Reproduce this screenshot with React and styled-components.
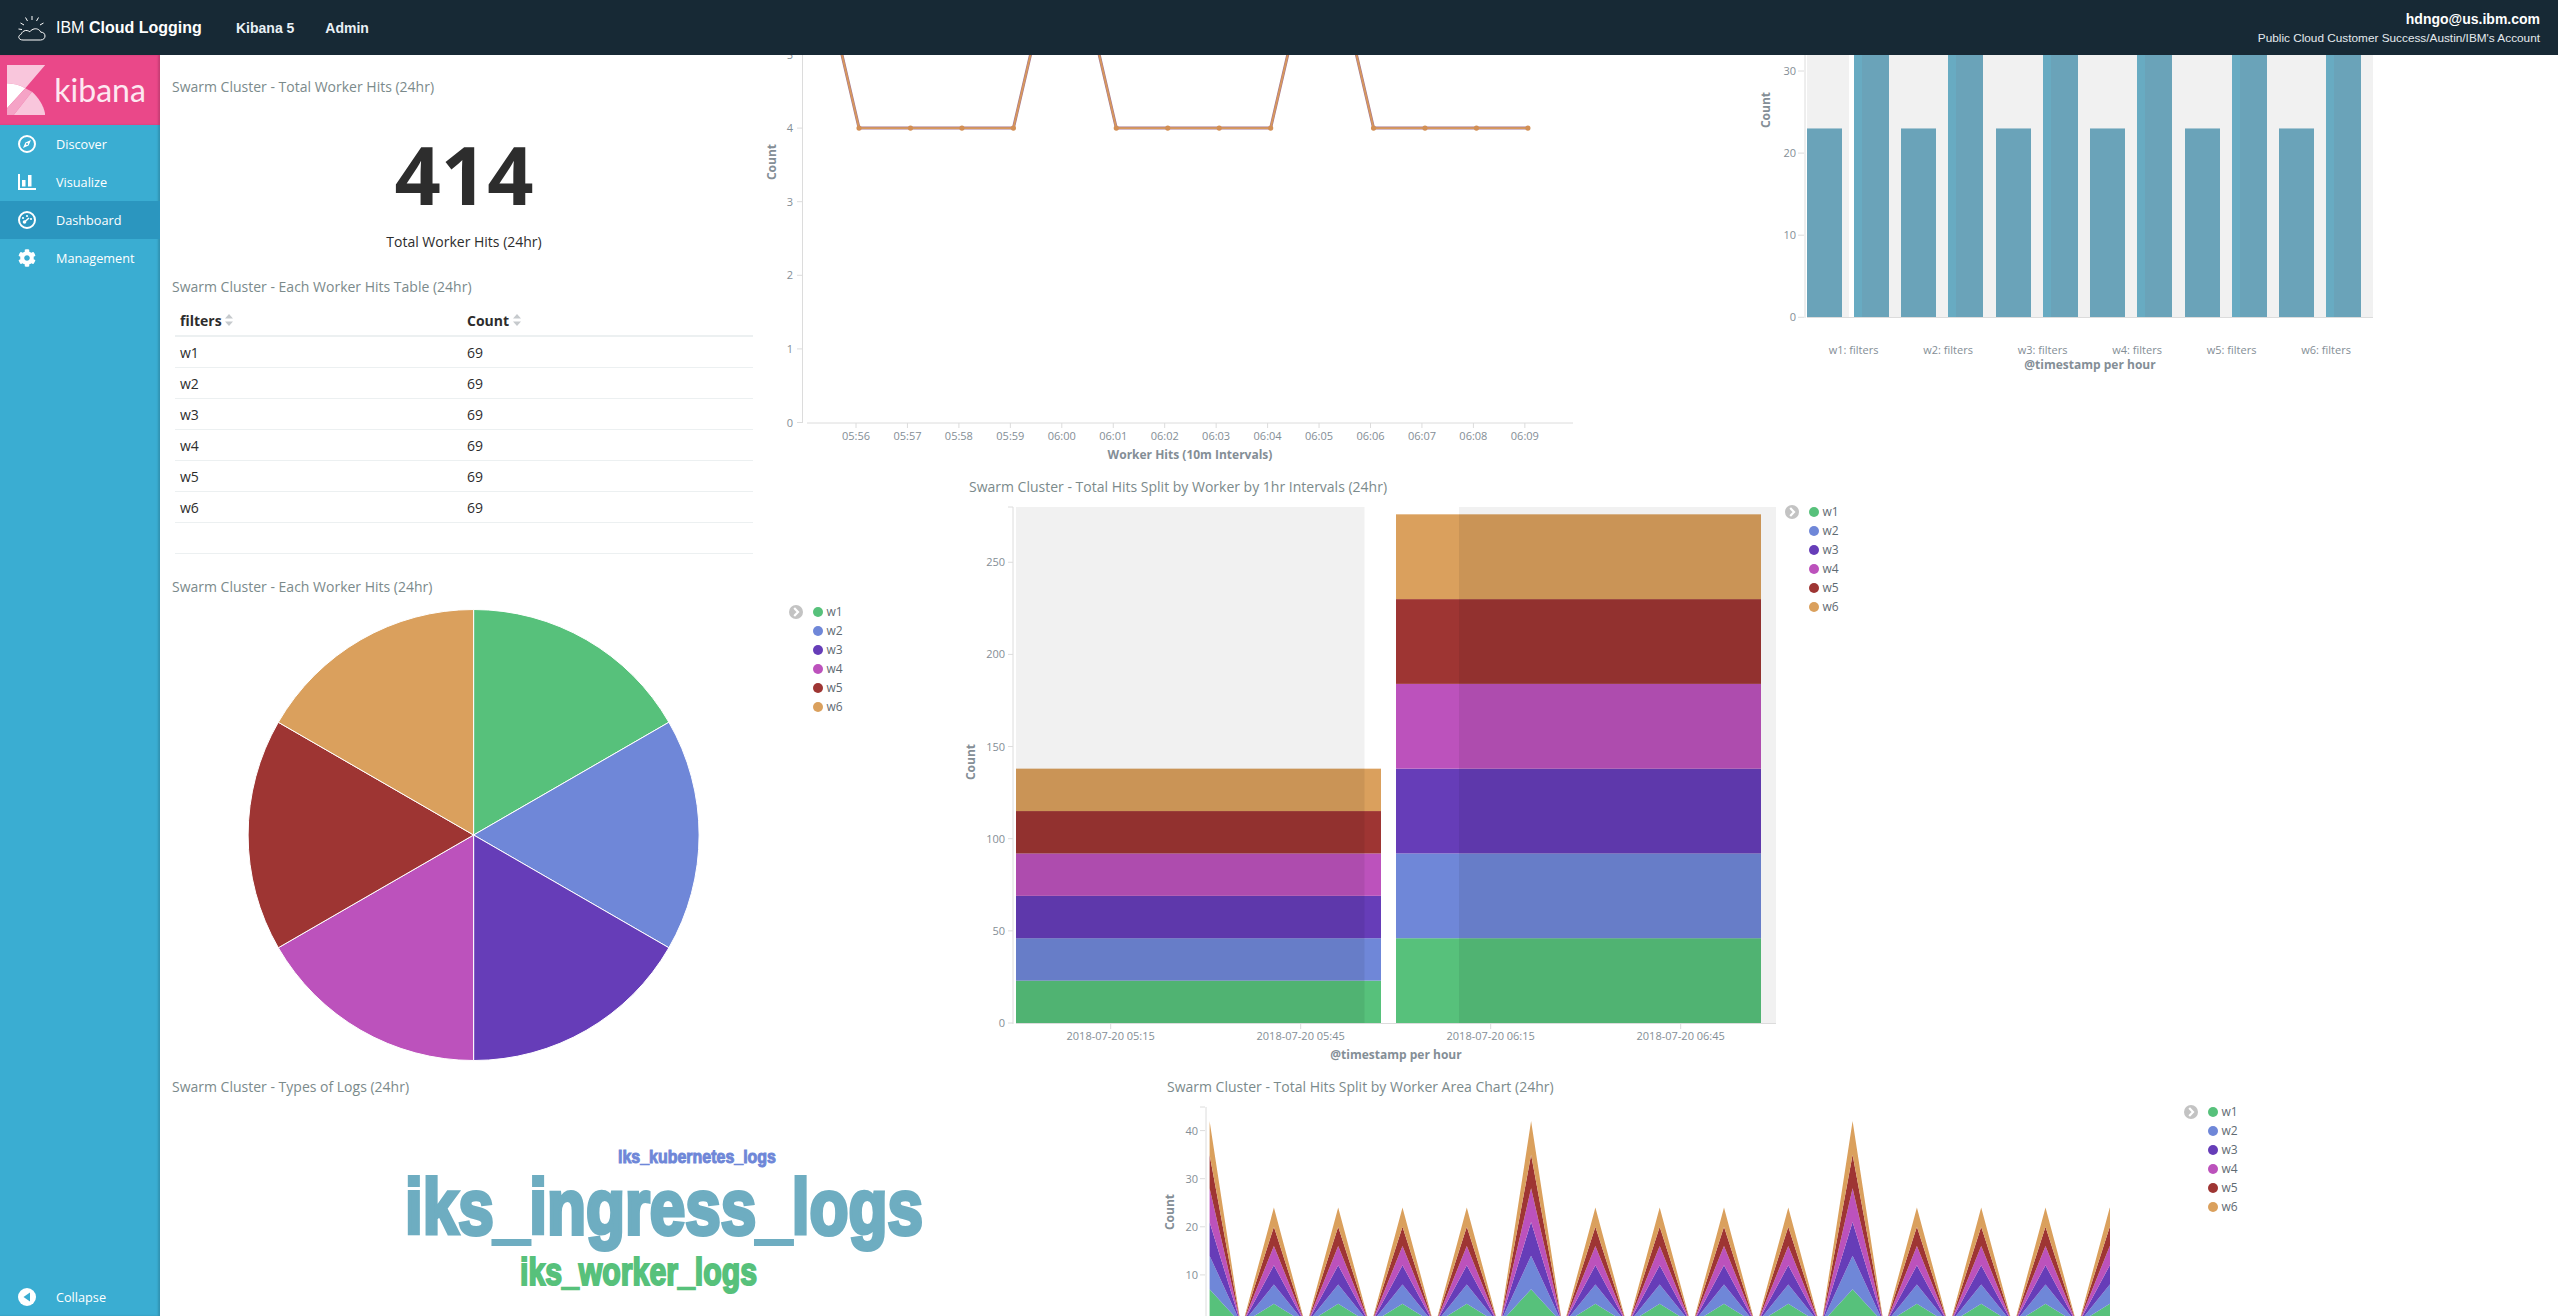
import React from "react";
import styled, { createGlobalStyle } from "styled-components";
import { FaCog } from "react-icons/fa";

const WORKERS = [
    { name: "w1", color: "#57c17b" },
    { name: "w2", color: "#6f87d8" },
    { name: "w3", color: "#663db8" },
    { name: "w4", color: "#bc52bc" },
    { name: "w5", color: "#9e3533" },
    { name: "w6", color: "#daa05d" },
];

const NAV = [
    { label: "Discover", icon: <CompassIcon /> },
    { label: "Visualize", icon: <BarsIcon /> },
    { label: "Dashboard", icon: <GaugeIcon />, active: true },
    { label: "Management", icon: <FaCog size={18} /> },
];

const GlobalStyle = createGlobalStyle`
    html, body {
        margin: 0;
        height: 100%;
        overflow: hidden;
        background: #ffffff;
        font-family: "Open Sans", "Liberation Sans", sans-serif;
    }
`;

export default function App() {
    return (
        <>
            <GlobalStyle />
            <Page>
                <TopBar>
                    <Brand>
                        <CloudLogo />
                        <BrandName>IBM <b>Cloud Logging</b></BrandName>
                    </Brand>
                    <TopLink>Kibana 5</TopLink>
                    <TopLink>Admin</TopLink>
                    <Account>
                        <AccountMail>hdngo@us.ibm.com</AccountMail>
                        <AccountOrg>Public Cloud Customer Success/Austin/IBM's Account</AccountOrg>
                    </Account>
                </TopBar>
                <Body>
                    <Sidebar>
                        <LogoBox>
                            <KibanaMark />
                            <LogoText>kibana</LogoText>
                        </LogoBox>
                        {NAV.map((item) => (
                            <NavItem key={item.label} $active={item.active}>
                                <NavIcon>{item.icon}</NavIcon>
                                {item.label}
                            </NavItem>
                        ))}
                        <CollapseItem>
                            <NavIcon><CollapseIcon /></NavIcon>
                            Collapse
                        </CollapseItem>
                    </Sidebar>
                    <Dashboard>
                        <MetricPanel>
                            <PanelTitle>Swarm Cluster - Total Worker Hits (24hr)</PanelTitle>
                            <MetricValue>414</MetricValue>
                            <MetricLabel>Total Worker Hits (24hr)</MetricLabel>
                        </MetricPanel>
                        <TablePanel>
                            <PanelTitle>Swarm Cluster - Each Worker Hits Table (24hr)</PanelTitle>
                            <HitsTable />
                        </TablePanel>
                        <LinePanel><LineChart /></LinePanel>
                        <BarPanel><BarChart /></BarPanel>
                        <PiePanel>
                            <PanelTitle>Swarm Cluster - Each Worker Hits (24hr)</PanelTitle>
                            <ChartRow>
                                <PieChart />
                                <Legend />
                            </ChartRow>
                        </PiePanel>
                        <SplitPanel>
                            <PanelTitle>Swarm Cluster - Total Hits Split by Worker by 1hr Intervals (24hr)</PanelTitle>
                            <ChartRow>
                                <SplitChart />
                                <Legend />
                            </ChartRow>
                        </SplitPanel>
                        <LogsPanel>
                            <PanelTitle>Swarm Cluster - Types of Logs (24hr)</PanelTitle>
                            <WordCloud />
                        </LogsPanel>
                        <AreaPanel>
                            <PanelTitle>Swarm Cluster - Total Hits Split by Worker Area Chart (24hr)</PanelTitle>
                            <ChartRow>
                                <AreaChart />
                                <Legend />
                            </ChartRow>
                        </AreaPanel>
                    </Dashboard>
                </Body>
            </Page>
        </>
    );
}

function HitsTable() {
    return (
        <Table>
            <thead>
                <tr>
                    <HeadCell $first>filters <SortIcon /></HeadCell>
                    <HeadCell>Count <SortIcon /></HeadCell>
                </tr>
            </thead>
            <tbody>
                {WORKERS.map((w) => (
                    <tr key={w.name}>
                        <Cell>{w.name}</Cell>
                        <Cell>69</Cell>
                    </tr>
                ))}
                <tr>
                    <Cell />
                    <Cell />
                </tr>
            </tbody>
        </Table>
    );
}

function Legend() {
    return (
        <LegendBox>
            <LegendToggle>
                <svg width="14" height="14" viewBox="0 0 14 14">
                    <path d="M5.2 3 L9 7 L5.2 11" fill="none" stroke="#fff" strokeWidth="2.2" />
                </svg>
            </LegendToggle>
            <LegendList>
                {WORKERS.map((w) => (
                    <LegendRow key={w.name}>
                        <LegendDot $color={w.color} />
                        {w.name}
                    </LegendRow>
                ))}
            </LegendList>
        </LegendBox>
    );
}

function LineChart() {
    const xs = Array.from({ length: 15 }, (_, i) => 807.6 + 51.45 * i);
    const vals = [7, 4, 4, 4, 4, 7, 4, 4, 4, 4, 7, 4, 4, 4, 4];
    const y = (v) => 422.5 - v * 73.6;
    const pts = xs.map((x, i) => `${x},${y(vals[i])}`).join(" ");
    const ticks = ["05:56", "05:57", "05:58", "05:59", "06:00", "06:01", "06:02", "06:03", "06:04", "06:05", "06:06", "06:07", "06:08", "06:09"];
    return (
        <svg width="830" height="415" viewBox="760 55 830 415" style={{ display: "block" }}>
            <AxisLine x1="802.5" y1="55" x2="802.5" y2="423" />
            <AxisLine x1="807" y1="423" x2="1573" y2="423" />
            {[0, 1, 2, 3, 4, 5].map((v) => (
                <g key={v}>
                    <AxisLine x1="797" y1={y(v)} x2="802" y2={y(v)} />
                    <TickText x="793" y={y(v) + 4} textAnchor="end">{v}</TickText>
                </g>
            ))}
            {ticks.map((t, i) => (
                <g key={t}>
                    <AxisLine x1={856 + 51.45 * i} y1="423" x2={856 + 51.45 * i} y2="428" />
                    <TickText x={856 + 51.45 * i} y="440" textAnchor="middle">{t}</TickText>
                </g>
            ))}
            <AxisTitle transform="translate(776 162) rotate(-90)" textAnchor="middle">Count</AxisTitle>
            <AxisTitle x="1190" y="459" textAnchor="middle">Worker Hits (10m Intervals)</AxisTitle>
            <polyline points={pts} fill="none" stroke="#a5788f" strokeWidth="3" />
            <polyline points={pts} fill="none" stroke="#d9995b" strokeWidth="1.8" />
            {xs.map((x, i) => vals[i] === 4 && <circle key={x} cx={x} cy={y(4)} r="2.6" fill="#d28f55" />)}
        </svg>
    );
}

function BarChart() {
    const y = (v) => 317.3 - v * 8.21;
    const starts = [1807, 1854, 1901, 1948, 1996, 2043, 2090, 2137, 2185, 2232, 2279, 2326];
    const labels = ["w1", "w2", "w3", "w4", "w5", "w6"];
    return (
        <svg width="818" height="415" viewBox="1740 55 818 415" style={{ display: "block" }}>
            <rect x="1807" y="55" width="566" height="262" fill="#f1f1f1" />
            <rect x="1849" y="55" width="5" height="262" fill="#ffffff" />
            {starts.map((x, i) => {
                const tall = i % 2 === 1;
                return (
                    <g key={x}>
                        <rect x={x} y={y(tall ? 46 : 23)} width="35" height={(tall ? 46 : 23) * 8.21} fill="#6aa3b9" />
                        {tall && <rect x={x} y={y(46)} width="8" height={46 * 8.21} fill="#68abc2" />}
                    </g>
                );
            })}
            <AxisLine x1="1807" y1="317.5" x2="2373" y2="317.5" />
            <AxisLine x1="1805" y1="55" x2="1805" y2="318" />
            {[0, 10, 20, 30].map((v) => (
                <g key={v}>
                    <AxisLine x1="1798" y1={y(v)} x2="1804" y2={y(v)} />
                    <TickText x="1796" y={y(v) + 4} textAnchor="end">{v}</TickText>
                </g>
            ))}
            {labels.map((l, i) => (
                <TickText key={l} x={1853.6 + 94.5 * i} y="354" textAnchor="middle">{l}: filters</TickText>
            ))}
            <AxisTitle transform="translate(1770 110) rotate(-90)" textAnchor="middle">Count</AxisTitle>
            <AxisTitle x="2090" y="369" textAnchor="middle">@timestamp per hour</AxisTitle>
        </svg>
    );
}

function PieChart() {
    const cx = 473.6;
    const cy = 835;
    const r = 225.5;
    const at = (deg) => {
        const a = (deg * Math.PI) / 180;
        return `${cx + r * Math.sin(a)} ${cy - r * Math.cos(a)}`;
    };
    return (
        <svg width="625" height="474" viewBox="164 596 625 474" style={{ display: "block", flex: "none" }}>
            {WORKERS.map((w, i) => (
                <path
                    key={w.name}
                    d={`M${cx} ${cy} L${at(i * 60)} A${r} ${r} 0 0 1 ${at((i + 1) * 60)} Z`}
                    fill={w.color}
                    stroke="#ffffff"
                    strokeWidth="1"
                />
            ))}
        </svg>
    );
}

function SplitChart() {
    const y = (v) => 1023 - v * 1.843;
    const left = { x: 1016, w: 365, step: 23 };
    const right = { x: 1396, w: 365, step: 46 };
    const ticks = ["2018-07-20 05:15", "2018-07-20 05:45", "2018-07-20 06:15", "2018-07-20 06:45"];
    return (
        <svg width="824" height="574" viewBox="961 496 824 574" style={{ display: "block", flex: "none" }}>
            <rect x="1016" y="507" width="348.5" height="516" fill="#f1f1f1" />
            <rect x="1459" y="507" width="317" height="516" fill="#f1f1f1" />
            {[left, right].map((bar) =>
                WORKERS.map((w, i) => (
                    <rect
                        key={bar.x + w.name}
                        x={bar.x}
                        y={y((i + 1) * bar.step)}
                        width={bar.w}
                        height={bar.step * 1.843}
                        fill={w.color}
                    />
                ))
            )}
            <rect x="1016" y={y(138)} width="348.5" height={138 * 1.843} fill="#000" opacity="0.07" />
            <rect x="1459" y={y(276)} width="302" height={276 * 1.843} fill="#000" opacity="0.07" />
            <AxisLine x1="1016" y1="1023.5" x2="1776" y2="1023.5" />
            <AxisLine x1="1013" y1="507" x2="1013" y2="1024" />
            <AxisLine x1="1008" y1="507" x2="1013" y2="507" />
            {[0, 50, 100, 150, 200, 250].map((v) => (
                <g key={v}>
                    <AxisLine x1="1008" y1={y(v)} x2="1013" y2={y(v)} />
                    <TickText x="1005" y={y(v) + 4} textAnchor="end">{v}</TickText>
                </g>
            ))}
            {ticks.map((t, i) => (
                <g key={t}>
                    <AxisLine x1={1110.7 + 190 * i} y1="1024" x2={1110.7 + 190 * i} y2="1029" />
                    <TickText x={1110.7 + 190 * i} y="1040" textAnchor="middle">{t}</TickText>
                </g>
            ))}
            <AxisTitle transform="translate(975 762) rotate(-90)" textAnchor="middle">Count</AxisTitle>
            <AxisTitle x="1396" y="1059" textAnchor="middle">@timestamp per hour</AxisTitle>
        </svg>
    );
}

function AreaChart() {
    const y = (v) => 1323 - v * 4.81;
    const peaks = Array.from({ length: 15 }, (_, i) => ({
        x: 1209.6 + 64.3 * i,
        v: i % 5 === 0 ? 7 : 4,
    }));
    return (
        <svg width="1025" height="220" viewBox="1159 1096 1025 220" style={{ display: "block", flex: "none" }}>
            <defs>
                <clipPath id="area-clip">
                    <rect x="1209.6" y="1096" width="900.4" height="220" />
                </clipPath>
            </defs>
            <AxisLine x1="1206" y1="1107" x2="1206" y2="1316" />
            <AxisLine x1="1200" y1="1107" x2="1205" y2="1107" />
            {[10, 20, 30, 40].map((v) => (
                <g key={v}>
                    <AxisLine x1="1200" y1={y(v)} x2="1205" y2={y(v)} />
                    <TickText x="1198" y={y(v) + 4} textAnchor="end">{v}</TickText>
                </g>
            ))}
            <AxisTitle transform="translate(1174 1212) rotate(-90)" textAnchor="middle">Count</AxisTitle>
            <g clipPath="url(#area-clip)">
                {peaks.map((p) =>
                    WORKERS.map((w, i) => (
                        <polygon
                            key={p.x + w.name}
                            points={`${p.x - 31},${y(0)} ${p.x},${y((i + 1) * p.v)} ${p.x + 31},${y(0)} ${p.x},${y(i * p.v)}`}
                            fill={w.color}
                        />
                    ))
                )}
            </g>
        </svg>
    );
}

function WordCloud() {
    return (
        <svg width="995" height="220" viewBox="164 1096 995 220" style={{ display: "block" }}>
            <CloudWord x="618" y="1163" fontSize="19" textLength="158" fill="#6f87d8" stroke="#6f87d8" strokeWidth="1">iks_kubernetes_logs</CloudWord>
            <CloudWord x="405" y="1234" fontSize="78" textLength="518" fill="#6eadc1" stroke="#6eadc1" strokeWidth="4">iks_ingress_logs</CloudWord>
            <CloudWord x="520" y="1285" fontSize="38" textLength="237" fill="#57c17b" stroke="#57c17b" strokeWidth="2">iks_worker_logs</CloudWord>
        </svg>
    );
}

function CloudLogo() {
    return (
        <svg width="28" height="26" viewBox="0 0 28 26" fill="none" stroke="#fff" strokeWidth="1">
            <path d="M5 25 H22.5 C25.5 25 27 23 27 21 C27 18.5 25 17 22.8 17.2 C21.5 14.2 18 13 15 14.3 C13.8 14.8 12.5 15.5 11.8 16.8 C10.5 15.8 8 14.8 6 16 C4 17 3.6 18.2 3.4 19 C1.8 19.6 0.6 21 0.8 22.4 C1 24 2.6 25 5 25 Z" />
            <path d="M14 1 V5 M7.5 2.5 L9.5 6 M20.5 2.5 L18.5 6 M2.5 8 L6 10 M25.5 8 L22 10 M0.5 14 L4 14.5" />
        </svg>
    );
}

function KibanaMark() {
    return (
        <svg width="38.3" height="50" viewBox="0 0 38.3 50">
            <path d="M0 0 H38.3 L18.3 23.3 C12.5 20 6.5 18.5 0 18.3 Z" fill="#f9c6dc" />
            <path d="M0 18.3 C6.5 18.5 12.5 20 18.3 23.3 L0 43.3 Z" fill="#ffffff" />
            <path d="M0 43.3 V50 H6.7 L25 26.7 C23 25.5 20.5 24.3 18.3 23.3 Z" fill="#f5a3c6" />
            <path d="M6.7 50 H38.3 C37 41 32 33 25 26.7 Z" fill="#f9c6dc" />
        </svg>
    );
}

function CompassIcon() {
    return (
        <svg width="18" height="18" viewBox="0 0 18 18">
            <circle cx="9" cy="9" r="8" fill="none" stroke="#fff" strokeWidth="2" />
            <path d="M13 5 L10.6 10.6 L5 13 L7.4 7.4 Z M9 8 A1 1 0 1 0 9 10 A1 1 0 1 0 9 8 Z" fill="#fff" fillRule="evenodd" />
        </svg>
    );
}

function BarsIcon() {
    return (
        <svg width="18" height="16" viewBox="0 0 18 16" fill="#fff">
            <path d="M0 0 H2 V14 H18 V16 H0 Z" />
            <rect x="4" y="6" width="3.5" height="6.5" />
            <rect x="10" y="1" width="3.5" height="11.5" />
        </svg>
    );
}

function GaugeIcon() {
    return (
        <svg width="18" height="18" viewBox="0 0 18 18">
            <circle cx="9" cy="9" r="8" fill="none" stroke="#fff" strokeWidth="2" />
            <circle cx="6.5" cy="11" r="1.8" fill="#fff" />
            <path d="M6.5 11 L11 7" stroke="#fff" strokeWidth="1.5" />
            <circle cx="5" cy="7" r="1.1" fill="#fff" />
            <circle cx="9" cy="5" r="1.1" fill="#fff" />
            <circle cx="13" cy="8" r="1.1" fill="#fff" />
        </svg>
    );
}

function CollapseIcon() {
    return (
        <svg width="18" height="18" viewBox="0 0 18 18">
            <circle cx="9" cy="9" r="9" fill="#fff" />
            <path d="M12 4.5 V13.5 L5.5 9 Z" fill="#3aadd2" />
        </svg>
    );
}

function SortIcon() {
    return (
        <svg width="8" height="12" viewBox="0 0 8 12" fill="#c6cacd">
            <path d="M4 0 L8 4.5 H0 Z M4 12 L8 7.5 H0 Z" />
        </svg>
    );
}

const Page = styled.div`
    display: flex;
    flex-direction: column;
    width: 2558px;
    height: 1316px;
    overflow: hidden;
`;

const TopBar = styled.header`
    display: flex;
    align-items: center;
    flex: none;
    height: 55px;
    padding: 0 18px;
    background: #172935;
    color: #ffffff;
    font-family: "Liberation Sans", Arial, sans-serif;
`;

const Brand = styled.div`
    display: flex;
    align-items: center;
    gap: 10px;
    width: 218px;
`;

const BrandName = styled.span`
    font-size: 16px;
`;

const TopLink = styled.a`
    margin-right: 31px;
    font-size: 14px;
    font-weight: 700;
    color: #e9f1f6;
`;

const Account = styled.div`
    display: flex;
    flex-direction: column;
    align-items: flex-end;
    gap: 4px;
    margin-left: auto;
`;

const AccountMail = styled.span`
    font-size: 14px;
    font-weight: 700;
`;

const AccountOrg = styled.span`
    font-size: 11.8px;
    color: #e4eaee;
`;

const Body = styled.div`
    display: flex;
    flex: 1;
    min-height: 0;
`;

const Sidebar = styled.nav`
    display: flex;
    flex-direction: column;
    flex: none;
    width: 160px;
    background: #3aadd2;
    color: #ffffff;
    font-size: 12.7px;
    box-shadow: inset -2px 0 2px rgba(0, 0, 0, 0.15);
`;

const LogoBox = styled.div`
    display: flex;
    align-items: center;
    gap: 9px;
    height: 70px;
    padding-left: 7px;
    background: #ea4889;
    box-shadow: inset -2px 0 2px rgba(0, 0, 0, 0.15);
`;

const LogoText = styled.span`
    font-family: Lato, "Open Sans", sans-serif;
    font-size: 32px;
    color: #fde8f1;
    line-height: 1;
`;

const NavItem = styled.a`
    display: flex;
    align-items: center;
    height: 38px;
    background: ${(props) => (props.$active ? "#2b96bf" : "transparent")};
`;

const CollapseItem = styled(NavItem)`
    margin-top: auto;
`;

const NavIcon = styled.span`
    display: flex;
    justify-content: center;
    width: 18px;
    margin: 0 20px 0 18px;
`;

const Dashboard = styled.main`
    display: grid;
    flex: 1;
    min-width: 0;
    padding-left: 4px;
    grid-template-columns: 596px 201px 198px 431px 150px 120px 1fr;
    grid-template-rows: 215px 200px 100px 500px 246px;
    grid-template-areas:
        "metric line line line . bar bar"
        "table  line line line . bar bar"
        "table  .    split split split split ."
        "pie    pie  split split split split ."
        "logs   logs logs area area area area";
`;

const Panel = styled.section`
    display: flex;
    flex-direction: column;
    min-width: 0;
    overflow: hidden;
`;

const MetricPanel = styled(Panel)`
    grid-area: metric;
    padding-top: 15px;
`;

const TablePanel = styled(Panel)`
    grid-area: table;
`;

const LinePanel = styled(Panel)`
    grid-area: line;
`;

const BarPanel = styled(Panel)`
    grid-area: bar;
`;

const PiePanel = styled(Panel)`
    grid-area: pie;
`;

const SplitPanel = styled(Panel)`
    grid-area: split;
`;

const LogsPanel = styled(Panel)`
    grid-area: logs;
`;

const AreaPanel = styled(Panel)`
    grid-area: area;
`;

const PanelTitle = styled.h2`
    flex: none;
    margin: 0;
    padding: 8px 0 0 8px;
    font-size: 14px;
    font-weight: 400;
    line-height: 18px;
    color: #7b8a8b;
    white-space: nowrap;
`;

const MetricValue = styled.div`
    margin-top: 28px;
    width: 600px;
    text-align: center;
    font-size: 81px;
    font-weight: 700;
    line-height: 100px;
    color: #2d2d2d;
`;

const MetricLabel = styled.div`
    margin-top: 8px;
    width: 600px;
    text-align: center;
    font-size: 14px;
    line-height: 20px;
    color: #2d2d2d;
`;

const Table = styled.table`
    width: 578px;
    margin: 9px 0 0 11px;
    border-collapse: collapse;
    table-layout: fixed;
    font-size: 14px;
    color: #2d2d2d;
`;

const HeadCell = styled.th`
    width: ${(props) => (props.$first ? "277px" : "auto")};
    height: 30px;
    padding: 0 5px;
    border-bottom: 2px solid #ecf0f1;
    text-align: left;
    font-weight: 700;
`;

const Cell = styled.td`
    height: 30px;
    padding: 0 5px;
    border-bottom: 1px solid #ecf0f1;
`;

const ChartRow = styled.div`
    display: flex;
    flex: 1;
    min-height: 0;
`;

const LegendBox = styled.div`
    display: flex;
    gap: 9.5px;
    padding-top: 6px;
`;

const LegendToggle = styled.span`
    display: flex;
    flex: none;
    width: 14px;
    height: 14px;
    margin-top: 2.5px;
    border-radius: 50%;
    background: #c3c3c3;
`;

const LegendList = styled.div`
    display: flex;
    flex-direction: column;
`;

const LegendRow = styled.div`
    display: flex;
    align-items: center;
    gap: 4px;
    height: 19px;
    font-size: 12px;
    color: #5f6b73;
`;

const LegendDot = styled.span`
    width: 10px;
    height: 10px;
    border-radius: 50%;
    background: ${(props) => props.$color};
`;

const AxisLine = styled.line`
    stroke: #dcdcdc;
    stroke-width: 1;
`;

const TickText = styled.text`
    font-size: 11px;
    fill: #848e96;
`;

const AxisTitle = styled.text`
    font-size: 12px;
    font-weight: 700;
    fill: #848e96;
`;

const CloudWord = styled.text.attrs({ lengthAdjust: "spacingAndGlyphs" })`
    font-family: "Liberation Sans", Arial, sans-serif;
    font-weight: 700;
`;
